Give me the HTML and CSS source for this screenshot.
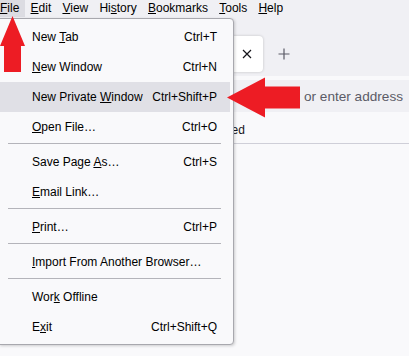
FILE: index.html
```html
<!DOCTYPE html>
<html lang="en">
<head>
<meta charset="utf-8">
<title>Firefox File menu</title>
<link rel="stylesheet" href="styles.css">
</head>
<body>
<div class="window">
  <nav class="menubar">
    <span class="mb-item active"><u>F</u>ile</span>
    <span class="mb-item"><u>E</u>dit</span>
    <span class="mb-item"><u>V</u>iew</span>
    <span class="mb-item">Hi<u>s</u>tory</span>
    <span class="mb-item"><u>B</u>ookmarks</span>
    <span class="mb-item"><u>T</u>ools</span>
    <span class="mb-item"><u>H</u>elp</span>
  </nav>
  <div class="tabstrip">
    <div class="tab">
      <span class="tab-close">
        <svg width="16" height="16" viewBox="0 0 16 16"><path d="M4 4L12 12M12 4L4 12" stroke="#15141a" stroke-width="1.2" fill="none"/></svg>
      </span>
    </div>
    <span class="newtab">
      <svg width="16" height="16" viewBox="0 0 16 16"><path d="M8 2.5V13.5M2.5 8H13.5" stroke="#5b5b66" stroke-width="1.2" fill="none"/></svg>
    </span>
  </div>
  <div class="navbar">
    <div class="urlbar"><span class="placeholder">or enter address</span></div>
  </div>
  <div class="bookmarks">
    <span class="bm-item">ed</span>
  </div>
  <div class="content"></div>

  <div class="menu">
    <div class="mi"><span>New <u>T</u>ab</span><span>Ctrl+T</span></div>
    <div class="mi"><span><u>N</u>ew Window</span><span>Ctrl+N</span></div>
    <div class="mi hover"><span>New Private <u>W</u>indow</span><span>Ctrl+Shift+P</span></div>
    <div class="mi"><span><u>O</u>pen File…</span><span>Ctrl+O</span></div>
    <div class="sep"></div>
    <div class="mi"><span>Save Page <u>A</u>s…</span><span>Ctrl+S</span></div>
    <div class="mi"><span><u>E</u>mail Link…</span><span></span></div>
    <div class="sep"></div>
    <div class="mi"><span><u>P</u>rint…</span><span>Ctrl+P</span></div>
    <div class="sep"></div>
    <div class="mi"><span><u>I</u>mport From Another Browser…</span><span></span></div>
    <div class="sep"></div>
    <div class="mi"><span>Wor<u>k</u> Offline</span><span></span></div>
    <div class="mi"><span>E<u>x</u>it</span><span>Ctrl+Shift+Q</span></div>
  </div>

  <svg class="arrows" width="409" height="356" viewBox="0 0 409 356">
    <polygon points="12.5,16 25,46 21,46 21,72 4,72 4,46 0,46" fill="#ed1c24"/>
    <polygon points="227,97.5 265,77.5 265,86.5 300,86.5 300,108.5 265,108.5 265,117.5" fill="#ed1c24"/>
  </svg>
</div>
</body>
</html>
```
FILE: styles.css
```css
* { box-sizing: border-box; }
html, body { margin: 0; padding: 0; }
body {
  font-family: "Liberation Sans", Arial, sans-serif;
  font-size: 12px;
  color: #15141a;
  background: #f9f9fb;
}
.window {
  position: relative;
  width: 409px;
  height: 356px;
  overflow: hidden;
  display: flex;
  flex-direction: column;
}
u { text-decoration-thickness: 1px; text-underline-offset: 1px; }

.menubar {
  height: 18px;
  background: #f0f0f4;
  display: flex;
  align-items: flex-start;
  white-space: nowrap;
  color: #000;
}
.mb-item {
  height: 17px;
  line-height: 16px;
  padding: 0 5.6px;
}
.mb-item.active {
  padding-left: 0;
  background: #dcdce2;
}

.tabstrip {
  height: 58px;
  background: #f0f0f4;
  display: flex;
  align-items: flex-start;
  padding-top: 18px;
}
.tab {
  margin-left: 120px;
  width: 143px;
  height: 36px;
  background: #fff;
  border-radius: 4px;
  box-shadow: 0 0 3px rgba(0,0,0,0.2);
  display: flex;
  align-items: center;
  justify-content: flex-end;
  padding: 0 8px 0 10px;
}
.tab-close, .newtab { width: 16px; height: 16px; display: flex; }
.newtab { margin-left: 13px; margin-top: 10px; }

.navbar {
  height: 40px;
  background: #f9f9fb;
  padding: 4px 0 4px 100px;
}
.urlbar {
  height: 32px;
  background: #f0f0f4;
  border-radius: 4px 0 0 4px;
  display: flex;
  align-items: center;
  justify-content: flex-end;
  padding-right: 6px;
  white-space: nowrap;
}
.placeholder {
  font-size: 13.6px;
  color: #5b5b66;
}

.bookmarks {
  height: 28px;
  background: #f9f9fb;
  border-bottom: 1px solid #cfcfd8;
  display: flex;
  align-items: center;
  padding-left: 231.5px;
}
.bm-item { white-space: nowrap; }
.content { flex: 1; background: #f9f9fb; }

.menu {
  position: absolute;
  top: 18px;
  left: -1px;
  width: 235px;
  background: #f9f9fb;
  border: 1px solid #a8a8ae;
  border-radius: 0 4px 4px 0;
  box-shadow: 1px 1px 3px rgba(0,0,0,0.18);
  padding: 3px 3px 2px 0;
  color: #000;
  white-space: nowrap;
}
.mi {
  height: 30px;
  display: flex;
  align-items: center;
  justify-content: space-between;
  padding: 0 13px 0 32px;
}
.mi.hover { background: #e0e0e6; }
.sep {
  height: 1px;
  margin: 1px 9px 3px 8px;
  background: #b4b4ba;
}

.arrows {
  position: absolute;
  left: 0;
  top: 0;
  pointer-events: none;
}
```
